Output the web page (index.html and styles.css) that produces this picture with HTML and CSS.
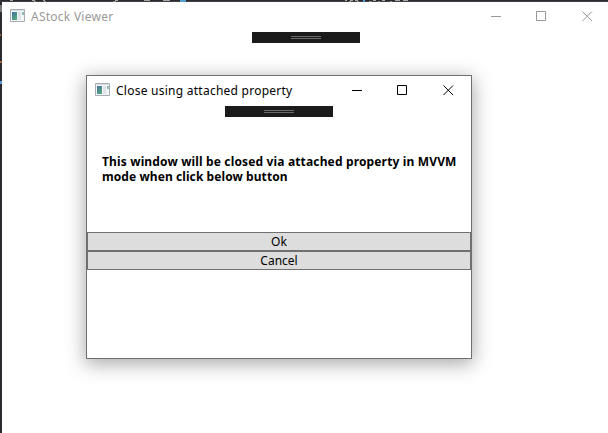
FILE: index.html
```html
<!DOCTYPE html>
<html lang="en">
<head>
<meta charset="utf-8">
<title>AStock Viewer</title>
<link rel="stylesheet" href="styles.css">
</head>
<body>
<svg class="backdrop" width="608" height="433" viewBox="0 0 608 433" shape-rendering="crispEdges" aria-hidden="true">
  <path d="M0 1.5H608" stroke="#3f3f46"/>
  <path d="M10 .5h3M32 .5h3M43 .5h2M115 .5h3M144 .5h6M163 .5h7M345 .5h2M350 .5h3M355 .5h3M373 .5h3M382 .5h3M395 .5h5M403 .5h5" stroke="#a8a8a8"/>
  <path d="M34 1.5h2M44 1.5h2M113 1.5h3M349 1.5h2M357 1.5h2M369 1.5h3M378 1.5h2M390 1.5h2" stroke="#8c8c8c"/>
  <path d="M180 0h6v2h-6zM363 0h2v2h-2zM0 81h2v3h-2z" fill="#569cd6"/>
  <path d="M0 5h2v7h-2z" fill="#77777a"/>
  <path d="M0 34h1v2h-1zM0 61h2v2h-2z" fill="#a5603c"/>
</svg>
<main class="window">
  <header class="titlebar inactive">
    <svg class="app-icon" width="16" height="14" viewBox="0 0 16 14">
      <defs><linearGradient id="pane" x1="0" y1="0" x2=".7" y2="1"><stop offset="0" stop-color="#456fa9"/><stop offset="1" stop-color="#54a878"/></linearGradient></defs>
      <path d="M.5.5h14v12H.5z" fill="#f4f5f7" stroke="#a9adb5"/>
      <path d="M1 1h13v1H1z" fill="#d6dae1"/>
      <path d="M2 3h5v8H2z" fill="url(#pane)"/>
      <path d="M8 3h3v8H8z" fill="#dfe2e6"/>
      <path d="M12 3h2v3h-2z" fill="#93b9b5"/>
    </svg>
    <h1 class="title">AStock Viewer</h1>
    <svg class="controls" width="102" height="12" viewBox="0 -1 102 12" fill="none" stroke="currentColor">
      <path d="M0 5.500h10M45.500 .5h9v9h-9z"/><path d="M91.500 .5l9.500 9.500M101 .5l-9.500 9.500"/>
    </svg>
  </header>
  <div class="debug-bar main-bar"><i class="grip"></i></div>
</main>
<section class="dialog" role="dialog">
  <header class="titlebar">
    <svg class="app-icon" width="16" height="14" viewBox="0 0 16 14">
      <path d="M.5.5h14v12H.5z" fill="#f4f5f7" stroke="#a9adb5"/>
      <path d="M1 1h13v1H1z" fill="#d6dae1"/>
      <path d="M2 3h5v8H2z" fill="url(#pane)"/>
      <path d="M8 3h3v8H8z" fill="#dfe2e6"/>
      <path d="M12 3h2v3h-2z" fill="#93b9b5"/>
    </svg>
    <h2 class="title">Close using attached property</h2>
    <svg class="controls" width="102" height="12" viewBox="0 -1 102 12" fill="none" stroke="currentColor">
      <path d="M0 5.500h10M45.500 .5h9v9h-9z"/><path d="M91.500 .5l9.500 9.500M101 .5l-9.500 9.500"/>
    </svg>
  </header>
  <div class="debug-bar dialog-bar"><i class="grip"></i></div>
  <p class="message">This window will be closed via attached property in MVVM<br><span class="second-line">mode when click below button</span></p>
  <div class="actions">
    <button class="btn" type="button">Ok</button>
    <button class="btn" type="button">Cancel</button>
  </div>
</section>
</body>
</html>
```
FILE: styles.css
```css
* { box-sizing: border-box; }
html, body { margin: 0; height: 100%; overflow: hidden; }
body {
  display: flex;
  background: #2b2b2f;
  font-family: "Noto Sans", "Open Sans", sans-serif;
  font-size: 12px;
  color: #000;
}
.backdrop { position: absolute; left: 0; top: 0; }
.window {
  position: relative;
  flex: 1;
  margin: 2px 0 0 2px;
  background: #fff;
}
.titlebar {
  display: flex;
  align-items: center;
  height: 28px;
  padding: 0 15px 0 8px;
}
.inactive { color: #999; }
.dialog > .titlebar { padding-right: 17px; }
.app-icon { flex: none; margin-right: 5px; }
.title {
  margin: 0;
  padding-top: 2px;
  font-size: 12px;
  font-weight: 400;
  line-height: 16px;
  letter-spacing: .25px;
  white-space: nowrap;
}
.controls { margin-left: auto; flex: none; }
.debug-bar {
  display: flex;
  align-items: center;
  justify-content: center;
  width: 108px;
  height: 11px;
  background: #1b1b1b;
}
.main-bar { margin: 2px 0 0 250px; }
.dialog-bar { margin: 2px auto 0; }
.grip { width: 30px; height: 3px; border: solid #696969; border-width: 1px 0; }
.dialog {
  position: absolute;
  left: 86px;
  top: 75px;
  width: 386px;
  height: 284px;
  border: 1px solid #707070;
  background: #fff;
  box-shadow: 0 4px 18px 1px rgba(0, 0, 0, .34);
}
.message {
  margin: 37px 0 0 15px;
  font-weight: 700;
  line-height: 15px;
  letter-spacing: .15px;
  white-space: nowrap;
}
.second-line { letter-spacing: .08px; }
.actions { display: flex; flex-direction: column; margin-top: 48px; }
.btn {
  height: 19px;
  padding: 0;
  border: 1px solid #707070;
  background: #ddd;
  font: inherit;
  line-height: 16px;
  color: #000;
}
```
